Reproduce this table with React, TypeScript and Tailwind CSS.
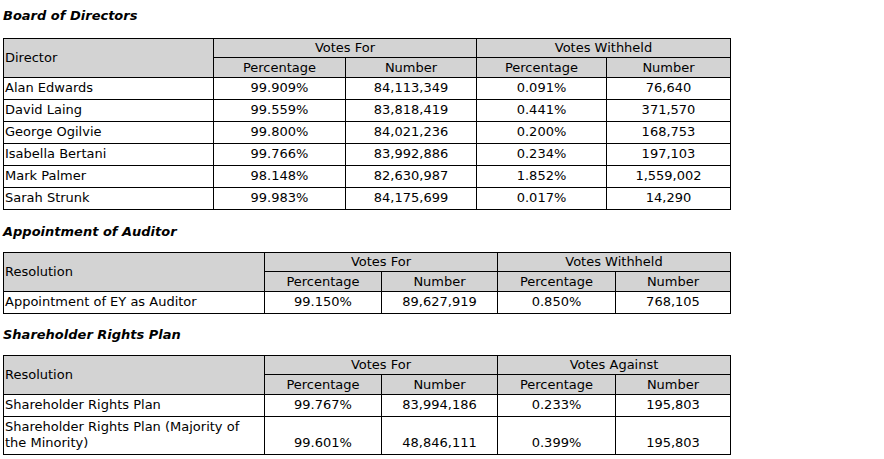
import React from "react"

type Row = { name: string; forPct: string; forNum: string; agPct: string; agNum: string }

interface VoteTableProps {
  firstHeader: string
  againstLabel: string
  widths: string[]
  rows: Row[]
}

const directors: Row[] = [
  { name: "Alan Edwards", forPct: "99.909%", forNum: "84,113,349", agPct: "0.091%", agNum: "76,640" },
  { name: "David Laing", forPct: "99.559%", forNum: "83,818,419", agPct: "0.441%", agNum: "371,570" },
  { name: "George Ogilvie", forPct: "99.800%", forNum: "84,021,236", agPct: "0.200%", agNum: "168,753" },
  { name: "Isabella Bertani", forPct: "99.766%", forNum: "83,992,886", agPct: "0.234%", agNum: "197,103" },
  { name: "Mark Palmer", forPct: "98.148%", forNum: "82,630,987", agPct: "1.852%", agNum: "1,559,002" },
  { name: "Sarah Strunk", forPct: "99.983%", forNum: "84,175,699", agPct: "0.017%", agNum: "14,290" },
]

const auditor: Row[] = [
  { name: "Appointment of EY as Auditor", forPct: "99.150%", forNum: "89,627,919", agPct: "0.850%", agNum: "768,105" },
]

const rightsPlan: Row[] = [
  { name: "Shareholder Rights Plan", forPct: "99.767%", forNum: "83,994,186", agPct: "0.233%", agNum: "195,803" },
  {
    name: "Shareholder Rights Plan (Majority of the Minority)",
    forPct: "99.601%",
    forNum: "48,846,111",
    agPct: "0.399%",
    agNum: "195,803",
  },
]

function VoteTable({ firstHeader, againstLabel, widths, rows }: VoteTableProps) {
  const th = "border border-black bg-[#d3d3d3] font-normal text-center px-[2px] py-0 h-[19px] leading-4"
  const th2 = "border border-black bg-[#d3d3d3] font-normal text-center px-[2px] py-0 h-[20px] leading-4"
  const td = "border border-black px-[2px] pt-[2px] pb-[3px] leading-4 align-bottom text-center"

  return (
    <table className="table-fixed border-collapse w-[727px] text-[13px] text-black">
      <colgroup>
        {widths.map((w, i) => (
          <col key={i} className={w} />
        ))}
      </colgroup>
      <thead>
        <tr>
          <th rowSpan={2} className="border border-black bg-[#d3d3d3] font-normal text-left align-middle px-[1px] leading-4">
            {firstHeader}
          </th>
          <th colSpan={2} className={th}>Votes For</th>
          <th colSpan={2} className={th}>{againstLabel}</th>
        </tr>
        <tr>
          <th className={th2}>Percentage</th>
          <th className={th2}>Number</th>
          <th className={th2}>Percentage</th>
          <th className={th2}>Number</th>
        </tr>
      </thead>
      <tbody>
        {rows.map(r => (
          <tr key={r.name}>
            <td className="border border-black px-[1px] pt-[2px] pb-[3px] leading-4 align-bottom text-left">{r.name}</td>
            <td className={td}>{r.forPct}</td>
            <td className={td}>{r.forNum}</td>
            <td className={td}>{r.agPct}</td>
            <td className={td}>{r.agNum}</td>
          </tr>
        ))}
      </tbody>
    </table>
  )
}

function Heading({ children, gap }: { children: React.ReactNode; gap: string }) {
  return <h3 className={`text-[13px] font-bold italic leading-4 ${gap}`}>{children}</h3>
}

export default function App() {
  return (
    <div className="w-[884px] h-[459px] bg-white px-[3px] pt-[8px] font-['DejaVu_Sans',Verdana,sans-serif] text-black overflow-hidden">
      <Heading gap="mb-[14px]">Board of Directors</Heading>
      <VoteTable
        firstHeader="Director"
        againstLabel="Votes Withheld"
        widths={["w-[210px]", "w-[132px]", "w-[131px]", "w-[130px]", "w-[124px]"]}
        rows={directors}
      />
      <div className="mt-[14px]">
        <Heading gap="mb-[12px]">Appointment of Auditor</Heading>
      </div>
      <VoteTable
        firstHeader="Resolution"
        againstLabel="Votes Withheld"
        widths={["w-[261px]", "w-[117px]", "w-[116px]", "w-[118px]", "w-[115px]"]}
        rows={auditor}
      />
      <div className="mt-[13px]">
        <Heading gap="mb-[12px]">Shareholder Rights Plan</Heading>
      </div>
      <VoteTable
        firstHeader="Resolution"
        againstLabel="Votes Against"
        widths={["w-[261px]", "w-[117px]", "w-[116px]", "w-[118px]", "w-[115px]"]}
        rows={rightsPlan}
      />
    </div>
  )
}
